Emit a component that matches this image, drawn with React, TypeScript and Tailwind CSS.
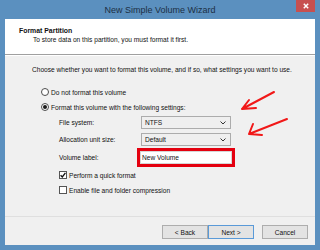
import React from "react";

function Radio({ checked, label }: { checked?: boolean; label: string }) {
  return (
    <div className="flex items-center h-[10px] pl-[9px]">
      <span className="w-[8px] h-[8px] rounded-full border border-[#4d4d4d] bg-white flex items-center justify-center">
        {checked && <span className="w-[4px] h-[4px] rounded-full bg-[#1a1a1a]" />}
      </span>
      <span className="ml-[2px]">{label}</span>
    </div>
  );
}

function Checkbox({ checked, label }: { checked?: boolean; label: string }) {
  return (
    <div className="flex items-center h-[10px] pl-[27px]">
      <span className="w-[8px] h-[8px] border border-[#555] bg-white flex items-center justify-center">
        {checked && (
          <svg width="6" height="6" viewBox="0 0 6 6">
            <path d="M0.6 3.2 L2.3 5 L5.4 0.8" stroke="#111" strokeWidth="1.3" fill="none" />
          </svg>
        )}
      </span>
      <span className="ml-[2px]">{label}</span>
    </div>
  );
}

function Select({ value }: { value: string }) {
  return (
    <div className="w-[90px] h-[13px] border border-[#acacac] bg-[#efefef] flex items-center justify-between pl-[3px] pr-[4px]">
      <span>{value}</span>
      <svg width="6" height="4" viewBox="0 0 6 4">
        <path d="M0.5 0.5 L3 3 L5.5 0.5" stroke="#333" strokeWidth="1" fill="none" />
      </svg>
    </div>
  );
}

function Button({ label, focused }: { label: string; focused?: boolean }) {
  return (
    <div
      className={`w-[46px] h-[14px] flex items-center justify-center bg-[#e3e3e3] border ${
        focused ? "border-[#5a9ad8]" : "border-[#adadad]"
      }`}
    >
      {label}
    </div>
  );
}

export default function App() {
  return (
    <div className="relative w-[320px] h-[250px] bg-[#5b90bf] flex flex-col font-['Liberation_Sans',Arial,sans-serif] text-[6.6px] leading-[9px] text-[#111]">
      {/* title bar */}
      <div className="relative h-[19px] flex items-center justify-center">
        <span className="text-[9px] text-[#1c2f44] leading-[12px]">New Simple Volume Wizard</span>
        <div className="absolute right-[5px] top-0 w-[19px] h-[12px] bg-[#c75050] flex items-center justify-center">
          <svg width="6" height="6" viewBox="0 0 6 6">
            <path d="M0.8 0.8 L5.2 5.2 M5.2 0.8 L0.8 5.2" stroke="#fff" strokeWidth="1.5" />
          </svg>
        </div>
      </div>

      {/* client */}
      <div className="mx-[5px] mb-[5px] flex-1 bg-[#f0f0f0] flex flex-col">
        <div className="h-[36px] bg-white border-b border-[#a0a0a0] pt-[7px] pl-[14px]">
          <div className="font-bold text-[6.9px]">Format Partition</div>
          <div className="pl-[14px]">To store data on this partition, you must format it first.</div>
        </div>
        <div className="h-px bg-white" />

        <div className="flex flex-col pl-[27px] pt-[9px]">
          <div>Choose whether you want to format this volume, and if so, what settings you want to use.</div>
          <div className="mt-[13px]">
            <Radio label="Do not format this volume" />
          </div>
          <div className="mt-[5px]">
            <Radio checked label="Format this volume with the following settings:" />
          </div>
          <div className="mt-[4px] flex items-center pl-[27px]">
            <span className="w-[82px]">File system:</span>
            <Select value="NTFS" />
          </div>
          <div className="mt-[4px] flex items-center pl-[27px]">
            <span className="w-[82px]">Allocation unit size:</span>
            <Select value="Default" />
          </div>
          <div className="mt-[2px] flex items-center pl-[27px]">
            <span className="w-[78px]">Volume label:</span>
            <div className="w-[98px] h-[19px] border-[3px] border-[#e4000f] bg-white">
              <div className="h-full border border-[#d6d6d6] flex items-center pl-[1px]">New Volume</div>
            </div>
          </div>
          <div className="mt-[3px]">
            <Checkbox checked label="Perform a quick format" />
          </div>
          <div className="mt-[5px]">
            <Checkbox label="Enable file and folder compression" />
          </div>
        </div>

        <div className="flex-1" />
        <div className="border-t border-[#dfdfdf] pt-[8px] pb-[6px] pr-[7px] flex justify-end">
          <Button label="< Back" />
          <Button label="Next >" focused />
          <div className="ml-[8px]">
            <Button label="Cancel" />
          </div>
        </div>
      </div>

      {/* annotation arrows */}
      <svg className="absolute left-0 top-0 pointer-events-none" width="320" height="250" viewBox="0 0 320 250">
        <g stroke="#f11818" strokeWidth="2" fill="none" strokeLinecap="round">
          <path d="M274 92 L242 109 M242 109 L249 100 M242 109 L256 108" />
          <path d="M287 119 L249 134 M249 134 L253 124 M249 134 L262 135" />
        </g>
      </svg>
    </div>
  );
}
